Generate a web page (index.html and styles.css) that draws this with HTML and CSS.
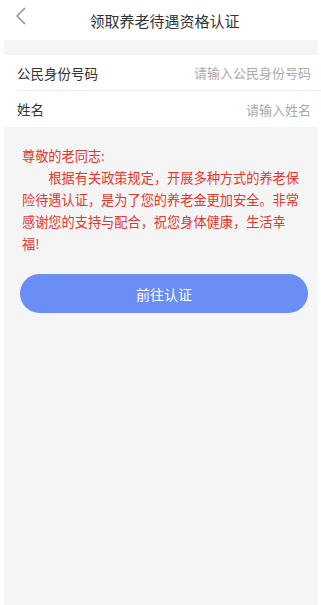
FILE: index.html
```html
<!DOCTYPE html>
<html lang="zh">
  <head>
    <meta charset="UTF-8" />
    <meta name="viewport" content="width=device-width, initial-scale=1.0" />
    <title>领取养老待遇资格认证</title>
    <link rel="stylesheet" href="styles.css">
  </head>
  <body>
    <div class="header">
      <span class="back">
        <svg width="12" height="20" viewBox="0 0 12 20">
          <path d="M10 2 L2 10 L10 18" fill="none" stroke="#888" stroke-width="1.3" />
        </svg>
      </span>
      <div class="title">领取养老待遇资格认证</div>
    </div>

    <div class="page">
      <div class="gap"></div>

      <div class="form">
        <div class="row">
          <div class="label">公民身份号码</div>
          <div class="placeholder">请输入公民身份号码</div>
        </div>
        <div class="row">
          <div class="label">姓名</div>
          <div class="placeholder">请输入姓名</div>
        </div>
      </div>

      <div class="notice">
        <p>尊敬的老同志:</p>
        <p class="indent">根据有关政策规定，开展多种方式的养老保险待遇认证，是为了您的养老金更加安全。非常感谢您的支持与配合，祝您身体健康，生活幸福!</p>
      </div>

      <div class="btnWrap">
        <button class="goBtn">前往认证</button>
      </div>
    </div>
  </body>
</html>
```

FILE: styles.css
```css
* {
  box-sizing: border-box;
}

html,
body {
  height: 100%;
}

body {
  margin: 0;
  background: #fff;
  font-family: "Noto Sans CJK SC", "Noto Sans", sans-serif;
  display: flex;
  flex-direction: column;
}

.header {
  height: 40px;
  position: relative;
  display: flex;
  align-items: center;
  justify-content: center;
}

.back {
  position: absolute;
  left: 15px;
  top: 6px;
}

.title {
  font-size: 15px;
  color: #333;
  margin-left: 8px;
}

.page {
  flex: 1;
  margin: 0 3px 0 4px;
  background: #f5f5f5;
}

.gap {
  height: 15px;
}

.form {
  background: #fff;
  margin: 0 -4px 0 -4px;
}

.row {
  height: 36px;
  margin-left: 17px;
  padding-right: 11px;
  display: flex;
  align-items: center;
  justify-content: space-between;
  border-bottom: 1px solid #eee;
}

.row:last-child {
  border-bottom: none;
}

.label {
  font-size: 13.5px;
  color: #333;
}

.placeholder {
  font-size: 13px;
  color: #aaa;
}

.notice {
  padding: 18px 18px 0 18px;
  color: #e4362c;
  font-size: 13.2px;
  line-height: 22px;
}

.notice p {
  margin: 0;
}

.indent {
  text-indent: 2em;
}

.btnWrap {
  padding: 19px 10px 0 16px;
}

.goBtn {
  width: 100%;
  height: 39px;
  border: none;
  border-radius: 20px;
  background: #6a8ef4;
  color: #fff;
  font-size: 14px;
  font-family: inherit;
}
```
